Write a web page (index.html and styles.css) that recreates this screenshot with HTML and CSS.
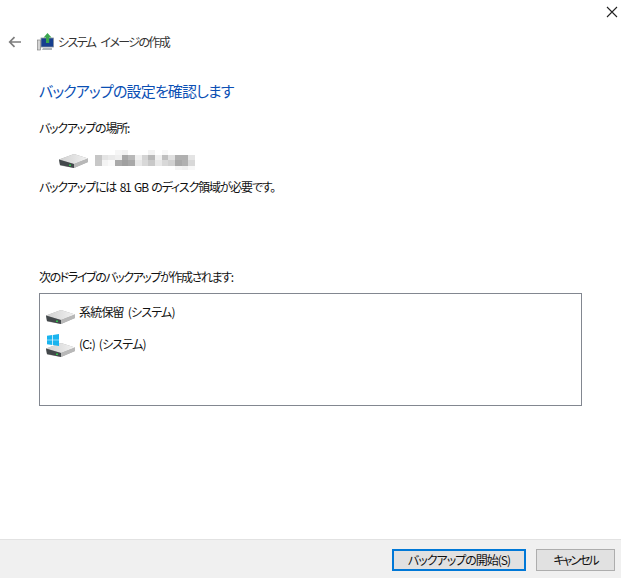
FILE: index.html
```html
<!DOCTYPE html>
<html lang="ja">
<head>
<meta charset="utf-8">
<title>システム イメージの作成</title>
<link rel="stylesheet" href="styles.css">
</head>
<body>
<div class="window">
  <div class="closebar">
    <svg class="close" width="12" height="12" viewBox="0 0 12 12"><path d="M1 1l10 10M11 1L1 11" stroke="#222" stroke-width="1.1" fill="none"/></svg>
  </div>
  <header class="titlebar">
    <svg class="back" width="14" height="12" viewBox="0 0 14 12"><path d="M13 6H2M6.500 1.200L1.700 6l4.800 4.800" stroke="#7d7d7d" stroke-width="1.700" fill="none"/></svg>
    <svg class="appicon" width="17" height="18" viewBox="0 0 17 18">
      <rect x="0.500" y="7" width="3" height="10" fill="#d4d4d4" stroke="#777" stroke-width="0.600"/>
      <rect x="4" y="5" width="12.500" height="9" fill="#173f8f" stroke="#8a939c" stroke-width="0.800"/>
      <path d="M6 15h9v2H5z" fill="#b0b5ba"/>
      <path d="M10.500 0l4 4.500h-2.300V10H9V4.500H6.600z" fill="#3aa64e"/>
    </svg>
    <span class="apptitle">システム イメージの作成</span>
  </header>
  <main class="content">
    <h1 class="heading">バックアップの設定を確認します</h1>
    <p class="label first">バックアップの場所:</p>
    <div class="location">
      <svg class="drive" width="30" height="15" viewBox="0 0 30 15"><use href="#hdd"/></svg>
      <svg class="mosaic" width="100" height="22" viewBox="0 0 100 22" shape-rendering="crispEdges">
        <rect x="20" y="1" width="7" height="5" fill="#f6f6f6"/><rect x="27" y="1" width="6" height="5" fill="#f2f2f2"/>
        <rect x="53" y="1" width="7" height="5" fill="#f3f3f3"/><rect x="67" y="1" width="6" height="5" fill="#f8f8f8"/>
        <rect x="0" y="6" width="7" height="5" fill="#c6c6c6"/><rect x="7" y="6" width="6" height="5" fill="#e4e4e4"/>
        <rect x="13" y="6" width="7" height="5" fill="#eaeaea"/><rect x="20" y="6" width="7" height="5" fill="#efefef"/>
        <rect x="27" y="6" width="6" height="5" fill="#a8a8a8"/><rect x="33" y="6" width="7" height="5" fill="#b8b8b8"/>
        <rect x="40" y="6" width="7" height="5" fill="#f0f0f0"/><rect x="47" y="6" width="6" height="5" fill="#d4d4d4"/>
        <rect x="53" y="6" width="7" height="5" fill="#b8b8b8"/><rect x="60" y="6" width="7" height="5" fill="#f0f0f0"/>
        <rect x="67" y="6" width="6" height="5" fill="#c0c0c0"/><rect x="73" y="6" width="7" height="5" fill="#e0e0e0"/>
        <rect x="80" y="6" width="7" height="5" fill="#b0b0b0"/><rect x="87" y="6" width="6" height="5" fill="#b0b0b0"/>
        <rect x="93" y="6" width="7" height="5" fill="#e4e4e4"/>
        <rect x="0" y="11" width="7" height="6" fill="#c8c8c8"/><rect x="7" y="11" width="6" height="6" fill="#f4f4f4"/>
        <rect x="13" y="11" width="7" height="6" fill="#fafafa"/><rect x="20" y="11" width="7" height="6" fill="#aaaaaa"/>
        <rect x="27" y="11" width="6" height="6" fill="#a0a0a0"/><rect x="33" y="11" width="7" height="6" fill="#a8a8a8"/>
        <rect x="40" y="11" width="7" height="6" fill="#e8e8e8"/><rect x="47" y="11" width="6" height="6" fill="#d8d8d8"/>
        <rect x="53" y="11" width="7" height="6" fill="#c8c8c8"/><rect x="60" y="11" width="7" height="6" fill="#e8e8e8"/>
        <rect x="67" y="11" width="6" height="6" fill="#d8d8d8"/><rect x="73" y="11" width="7" height="6" fill="#d0d0d0"/>
        <rect x="80" y="11" width="7" height="6" fill="#a8a8a8"/><rect x="87" y="11" width="6" height="6" fill="#b0b0b0"/>
        <rect x="93" y="11" width="7" height="6" fill="#d8d8d8"/>
        <rect x="80" y="17" width="7" height="4" fill="#f4f4f4"/><rect x="87" y="17" width="6" height="4" fill="#f0f0f0"/>
        <rect x="93" y="17" width="7" height="4" fill="#f8f8f8"/>
      </svg>
    </div>
    <p class="label">バックアップには 81 GB のディスク領域が必要です。</p>
    <p class="label second">次のドライブのバックアップが作成されます:</p>
    <div class="listbox">
      <div class="item">
        <svg class="drive" width="30" height="15" viewBox="0 0 30 15"><use href="#hdd"/></svg>
        <span class="itemtext">系統保留 (システム)</span>
      </div>
      <div class="item">
        <span class="drivewrap">
          <svg class="drive" width="30" height="15" viewBox="0 0 30 15"><use href="#hdd"/></svg>
          <svg class="winflag" width="12" height="12" viewBox="0 0 12 12"><path d="M0 1.700L5.300 1v4.700H0zM6 .9L12 0v5.700H6zM0 6.300h5.300V11L0 10.300zM6 6.300h6V12l-6-.9z" fill="#19b4ef"/></svg>
        </span>
        <span class="itemtext">(C:) (システム)</span>
      </div>
    </div>
  </main>
  <footer class="footer">
    <button class="btn primary">バックアップの開始(S)</button>
    <button class="btn cancel">キャンセル</button>
  </footer>
</div>
<svg class="defs" width="0" height="0">
  <defs>
    <linearGradient id="top" x1="0" y1="0" x2="1" y2="0"><stop offset="0" stop-color="#d0d0d0"/><stop offset="1" stop-color="#f2f2f2"/></linearGradient>
    <g id="hdd">
      <path d="M0 6.500L15 1l14 4.500v3.500L15 15 1 12.500z" fill="#a8a8a8"/>
      <path d="M0 6.500L15 1l14 4.500L15 11z" fill="url(#top)"/>
      <path d="M0 6.500L15 11v4L1 12z" fill="#43484b"/>
      <path d="M15 11l14-5.500V9l-14 6z" fill="#b8b8b8"/>
      <rect x="10" y="11.500" width="2" height="1.500" fill="#35c44d"/>
    </g>
  </defs>
</svg>
</body>
</html>
```

FILE: styles.css
```css
* { box-sizing: border-box; }
html, body { margin: 0; padding: 0; background: #fff; }
body { font-family: "Noto Sans CJK JP", "Noto Sans", sans-serif; font-size: 12px; color: #111; font-feature-settings: "palt"; }
.window { width: 621px; height: 578px; display: flex; flex-direction: column; overflow: hidden; }
.closebar { height: 24px; display: flex; justify-content: flex-end; align-items: flex-start; padding: 6px 3px 0 0; flex: none; }
.titlebar { height: 36px; display: flex; align-items: center; padding-left: 8px; flex: none; }
.back { margin-right: 15px; }
.appicon { margin-right: 4px; }
.apptitle { font-size: 12px; letter-spacing: -1.6px; word-spacing: 4px; color: #333; position: relative; top: -1px; }
.content { flex: 1; padding: 20px 39px 0; }
.heading { margin: 0; font-size: 15px; line-height: 22px; font-weight: 400; color: #0b4fb4; letter-spacing: -0.85px; }
.label { margin: 0; line-height: 18px; letter-spacing: -1.2px; word-spacing: 2px; color: #111; }
.first { margin-top: 17px; }
.second { margin-top: 72px; letter-spacing: -1.4px; }
.location { display: flex; align-items: center; gap: 6px; padding-left: 20px; height: 22px; margin: 12px 0 7px; }
.mosaic { display: block; }
.listbox { width: 543px; height: 113px; margin-top: 7px; border: 1px solid #828790; padding: 8px 6px; display: flex; flex-direction: column; gap: 7px; }
.item { display: flex; align-items: flex-start; gap: 3px; height: 25px; }
.drivewrap { position: relative; display: block; width: 30px; height: 15px; margin-top: 1px; }
.item .drive { margin-top: 7px; display: block; }
.winflag { position: absolute; left: 1px; top: -1px; }
.itemtext { line-height: 20px; letter-spacing: -0.8px; word-spacing: 2px; }
.footer { height: 39px; flex: none; background: #f0f0f0; border-top: 1px solid #e2e2e2; display: flex; justify-content: flex-end; gap: 10px; padding: 9px 6px 0 0; }
.btn { height: 22px; font: inherit; font-size: 12px; letter-spacing: -1px; line-height: 1; background: #e1e1e1; border: 1px solid #adadad; color: #111; padding: 0; width: 79px; }
.primary { width: 134px; border: 2px solid #0078d7; }
.cancel { letter-spacing: -2px; }
.defs { position: absolute; }
```
